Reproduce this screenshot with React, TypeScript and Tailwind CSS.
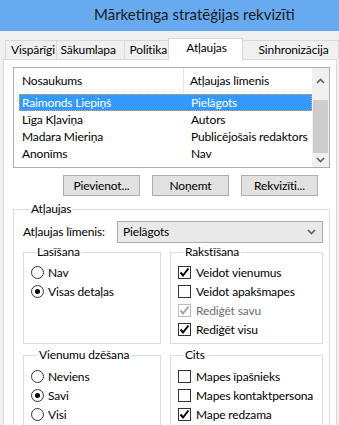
import React from "react";

const Check = ({ checked, disabled }: { checked?: boolean; disabled?: boolean }) => (
  <span
    className={
      "w-[13px] h-[13px] border bg-white flex items-center justify-center shrink-0 " +
      (disabled ? "border-[#bcbcbc]" : "border-[#333333]")
    }
  >
    {checked && (
      <svg width="11" height="11" viewBox="0 0 11 11">
        <path
          d="M1.5 5.5 L4 8.5 L9.5 1.5"
          fill="none"
          stroke={disabled ? "#a3a3a3" : "#000"}
          strokeWidth="2"
        />
      </svg>
    )}
  </span>
);

const Radio = ({ checked }: { checked?: boolean }) => (
  <span className="w-[13px] h-[13px] rounded-full border border-[#333333] bg-white flex items-center justify-center shrink-0">
    {checked && <span className="w-[5px] h-[5px] rounded-full bg-black" />}
  </span>
);

const CheckRow = ({ label, checked, disabled }: { label: string; checked?: boolean; disabled?: boolean }) => (
  <div className="h-[19px] flex items-center gap-[5px]">
    <Check checked={checked} disabled={disabled} />
    <span className={"whitespace-nowrap " + (disabled ? "text-[#6d6d6d]" : "")}>{label}</span>
  </div>
);

const RadioRow = ({ label, checked }: { label: string; checked?: boolean }) => (
  <div className="h-[19px] flex items-center gap-[4px]">
    <Radio checked={checked} />
    <span className="whitespace-nowrap">{label}</span>
  </div>
);

const Group = ({ title, children, legendMl, pt }: { title: string; children: React.ReactNode; legendMl: string; pt: string }) => (
  <fieldset className={"border border-[#dcdcdc] pb-[4px] pl-[7px] " + pt}>
    <legend className={"px-[2px] leading-[16px] " + legendMl}>{title}</legend>
    {children}
  </fieldset>
);

const Chevron = ({ up }: { up?: boolean }) => (
  <svg width="9" height="6" viewBox="0 0 9 6">
    <path
      d={up ? "M1 5 L4.5 1.5 L8 5" : "M1 1 L4.5 4.5 L8 1"}
      fill="none"
      stroke="#606060"
      strokeWidth="1.6"
    />
  </svg>
);

const rows = [
  ["Raimonds Liepiņš", "Pielāgots"],
  ["Līga Kļaviņa", "Autors"],
  ["Madara Mieriņa", "Publicējošais redaktors"],
  ["Anonīms", "Nav"],
];

export default function App() {
  return (
    <div className="w-[339px] h-[425px] overflow-hidden bg-[#f0f0f0] text-[12px] leading-[16px] tracking-[-0.15px] text-black font-['Lato',sans-serif]">
      <div className="h-[31px] bg-[#68aaef] pl-[94px] text-[15px] leading-[29px] tracking-normal text-[#1b1b1b] whitespace-nowrap">
        Mārketinga stratēģijas rekvizīti
      </div>
      <div className="pt-[6px] pl-[3px]">
        <div className="flex items-end h-[22px] pl-[2px] relative z-10 whitespace-nowrap">
          <div className="w-[53px] h-[19px] border border-b-0 border-[#d9d9d9] bg-[#f0f0f0] pl-[5px] leading-[18px] relative z-10">Vispārīgi</div>
          <div className="w-[71px] h-[19px] -ml-px border border-b-0 border-[#d9d9d9] bg-[#f0f0f0] pl-[4px] leading-[18px]">Sākumlapa</div>
          <div className="w-[47px] h-[19px] -ml-px border border-b-0 border-[#d9d9d9] bg-[#f0f0f0] pl-[5px] leading-[18px]">Politika</div>
          <div className="w-[76px] h-[22px] -ml-px border border-b-0 border-[#d9d9d9] bg-white pl-[17px] leading-[18px] -mb-px">Atļaujas</div>
          <div className="w-[100px] h-[19px] -ml-px border border-b-0 border-[#d9d9d9] bg-[#f0f0f0] pl-[16px] leading-[18px]">Sinhronizācija</div>
        </div>
        <div className="w-[334px] h-[400px] border border-[#d9d9d9] bg-white pl-[9px] pt-[7px]">
          {/* list */}
          <div className="w-[317px] h-[101px] border border-[#adadad] flex whitespace-nowrap">
            <div className="flex-1">
              <div className="h-[26px] flex items-center relative">
                <span className="pl-[8px] w-[169px]">Nosaukums</span>
                <span className="h-[26px] w-px bg-[#e5e5e5]" />
                <span className="pl-[6px]">Atļaujas līmenis</span>
              </div>
              <div className="pl-[5px]">
                {rows.map(([a, b], i) => (
                  <div
                    key={a}
                    className={
                      "h-[17px] flex items-center " +
                      (i === 0 ? "bg-[#3399ff] text-white border border-dotted border-[#f0a050]" : "border border-transparent")
                    }
                  >
                    <span className="pl-[2px] w-[171px]">{a}</span>
                    <span>{b}</span>
                  </div>
                ))}
              </div>
            </div>
            <div className="w-[17px] bg-[#f0f0f0] flex flex-col items-center">
              <div className="h-[26px] flex items-center justify-center"><Chevron up /></div>
              <div className="w-[15px] h-[53px] bg-[#cdcdcd] mt-[6px]" />
              <div className="flex-1 flex items-center justify-center"><Chevron /></div>
            </div>
          </div>
          {/* buttons */}
          <div className="flex gap-[12px] pl-[50px] mt-[7px] whitespace-nowrap">
            {["Pievienot...", "Noņemt", "Rekvizīti..."].map((t) => (
              <div key={t} className="w-[77px] h-[21px] border border-[#adadad] bg-[#e1e1e1] flex items-center justify-center">
                {t}
              </div>
            ))}
          </div>
          {/* Atļaujas group */}
          <fieldset className="w-[317px] mt-[5px] border border-[#dcdcdc] pl-[9px] pt-[4px] pb-[20px]">
            <legend className="ml-[6px] px-[2px] leading-[16px]">Atļaujas</legend>
            <div className="flex items-center h-[22px]">
              <span className="w-[94px] whitespace-nowrap">Atļaujas līmenis:</span>
              <div className="w-[206px] h-[22px] border border-[#acacac] bg-[#e9e9e9] flex items-center justify-between pl-[5px] pr-[6px]">
                <span>Pielāgots</span>
                <Chevron />
              </div>
            </div>
            <div className="grid grid-cols-[138px_153px] gap-x-[9px] mt-[1px]">
              <Group title="Lasīšana" legendMl="ml-[4px]" pt="pt-[3px]">
                <RadioRow label="Nav" />
                <RadioRow label="Visas detaļas" checked />
              </Group>
              <Group title="Rakstīšana" legendMl="ml-[5px]" pt="pt-[3px]">
                <CheckRow label="Veidot vienumus" checked />
                <CheckRow label="Veidot apakšmapes" />
                <CheckRow label="Rediģēt savu" checked disabled />
                <CheckRow label="Rediģēt visu" checked />
              </Group>
            </div>
            <div className="grid grid-cols-[138px_153px] gap-x-[9px] mt-[3px]">
              <Group title="Vienumu dzēšana" legendMl="ml-[6px]" pt="pt-[4px]">
                <RadioRow label="Neviens" />
                <RadioRow label="Savi" checked />
                <RadioRow label="Visi" />
              </Group>
              <Group title="Cits" legendMl="ml-[5px]" pt="pt-[4px]">
                <CheckRow label="Mapes īpašnieks" />
                <CheckRow label="Mapes kontaktpersona" />
                <CheckRow label="Mape redzama" checked />
              </Group>
            </div>
          </fieldset>
        </div>
      </div>
    </div>
  );
}
